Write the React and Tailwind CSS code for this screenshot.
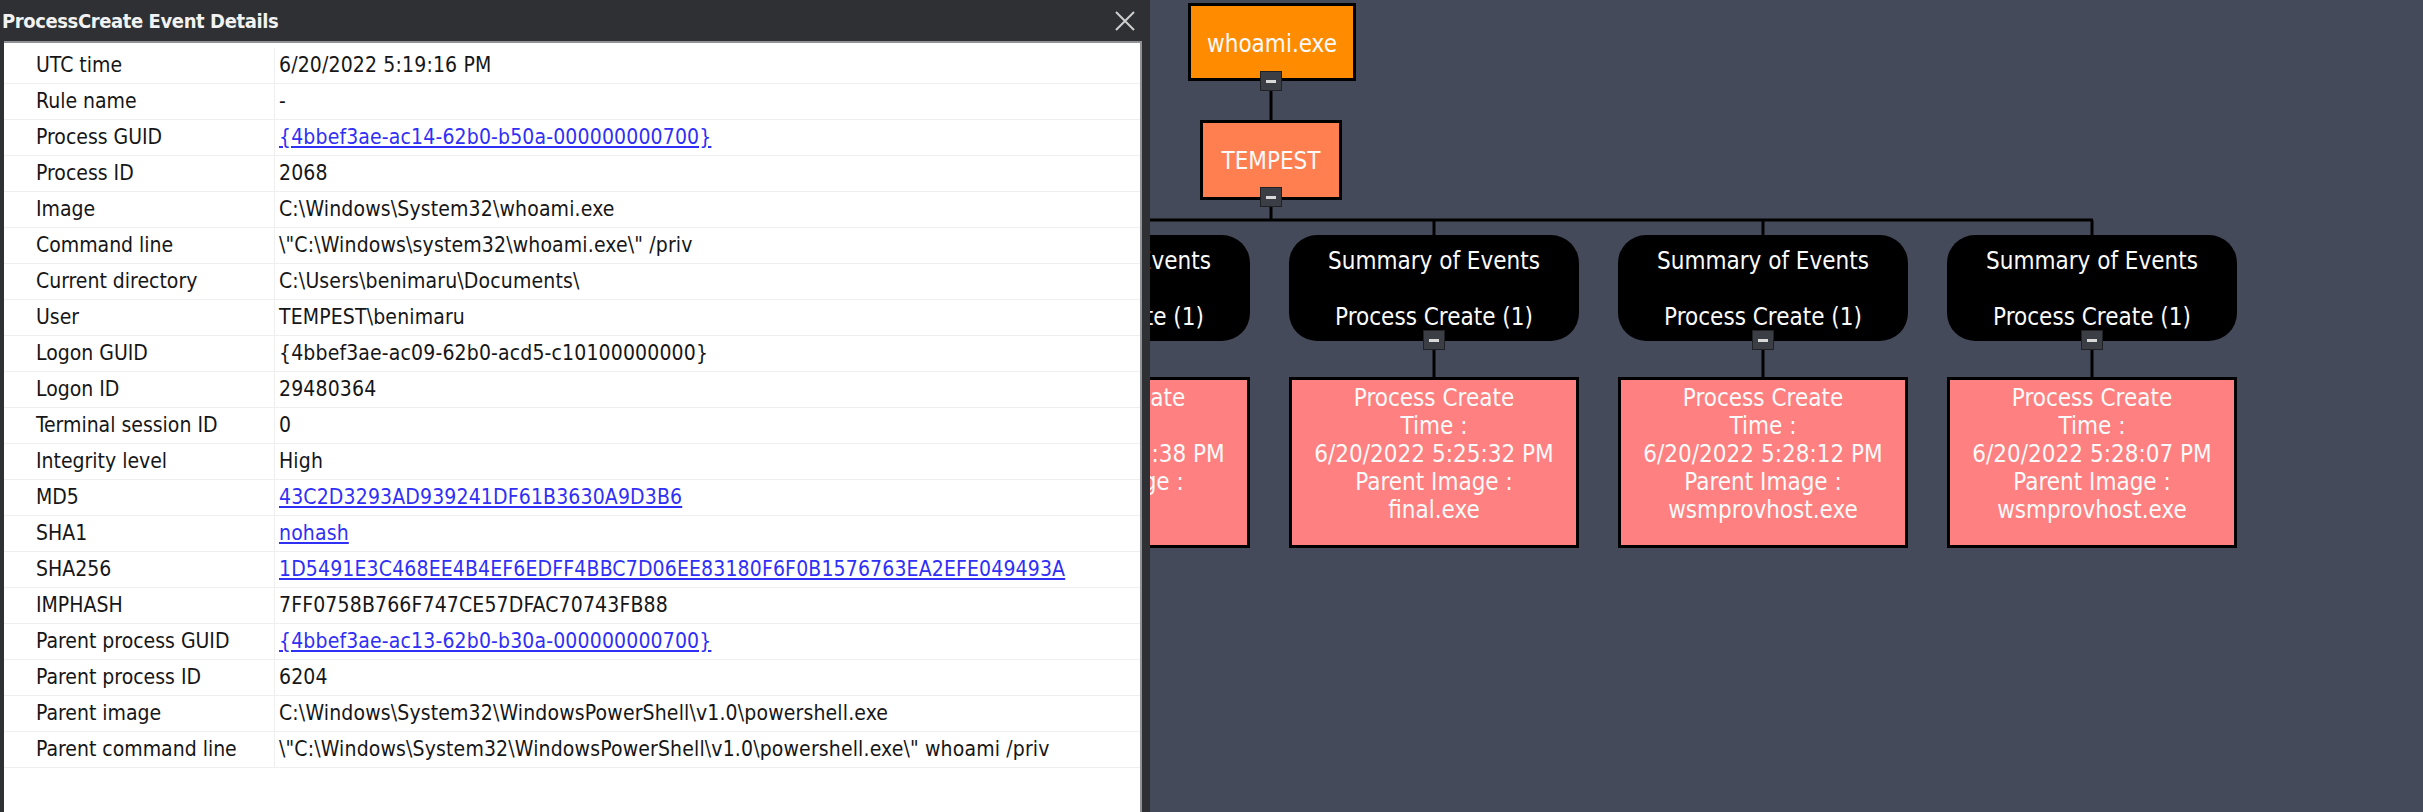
import React from 'react';

const rows = [
    { label: 'UTC time', value: '6/20/2022 5:19:16 PM' },
    { label: 'Rule name', value: '-' },
    { label: 'Process GUID', value: '{4bbef3ae-ac14-62b0-b50a-000000000700}', link: true },
    { label: 'Process ID', value: '2068' },
    { label: 'Image', value: 'C:\\Windows\\System32\\whoami.exe' },
    { label: 'Command line', value: '\\"C:\\Windows\\system32\\whoami.exe\\" /priv' },
    { label: 'Current directory', value: 'C:\\Users\\benimaru\\Documents\\' },
    { label: 'User', value: 'TEMPEST\\benimaru' },
    { label: 'Logon GUID', value: '{4bbef3ae-ac09-62b0-acd5-c10100000000}' },
    { label: 'Logon ID', value: '29480364' },
    { label: 'Terminal session ID', value: '0' },
    { label: 'Integrity level', value: 'High' },
    { label: 'MD5', value: '43C2D3293AD939241DF61B3630A9D3B6', link: true },
    { label: 'SHA1', value: 'nohash', link: true },
    { label: 'SHA256', value: '1D5491E3C468EE4B4EF6EDFF4BBC7D06EE83180F6F0B1576763EA2EFE049493A', link: true },
    { label: 'IMPHASH', value: '7FF0758B766F747CE57DFAC70743FB88' },
    { label: 'Parent process GUID', value: '{4bbef3ae-ac13-62b0-b30a-000000000700}', link: true },
    { label: 'Parent process ID', value: '6204' },
    { label: 'Parent image', value: 'C:\\Windows\\System32\\WindowsPowerShell\\v1.0\\powershell.exe' },
    { label: 'Parent command line', value: '\\"C:\\Windows\\System32\\WindowsPowerShell\\v1.0\\powershell.exe\\" whoami /priv' },
];

// event branches under TEMPEST, x = centre of the column inside the graph canvas
const branches = [
    { x: -45, time: '6/20/2022 5:21:38 PM', parent: 'final.exe' },
    { x: 284, time: '6/20/2022 5:25:32 PM', parent: 'final.exe' },
    { x: 613, time: '6/20/2022 5:28:12 PM', parent: 'wsmprovhost.exe' },
    { x: 942, time: '6/20/2022 5:28:07 PM', parent: 'wsmprovhost.exe' },
];

const Toggle = ({ x, y }) => (
    <div
        className="absolute flex h-[20px] w-[22px] items-center justify-center border border-[#1f2125] bg-[#3b3e45]"
        style={{ left: x - 11, top: y }}
    >
        <div className="h-[3px] w-[10px] bg-[#d8d8d8]" />
    </div>
);

const App = () => {
    return (
        <div className="flex h-[812px] w-full overflow-hidden bg-[#444a59] font-['DejaVu_Sans_Condensed','DejaVu_Sans',sans-serif]">
            {/* Details window */}
            <div className="flex w-[1150px] shrink-0 flex-col bg-[#2e3034]">
                <div className="flex h-[41px] items-center justify-between pl-[2px] pr-[15px]">
                    <span className="text-[20px] font-bold tracking-[-0.4px] text-[#f2f2f2]">ProcessCreate Event Details</span>
                    <svg width="20" height="20" viewBox="0 0 20 20">
                        <path d="M1 1 L19 19 M19 1 L1 19" stroke="#cfcfcf" strokeWidth="2" />
                    </svg>
                </div>
                <div className="ml-[4px] mr-[8px] flex-1 border-t-2 border-r-2 border-[#8f9297] bg-white pt-[5px]">
                    {rows.map((row) => (
                        <div key={row.label} className="flex h-[36px] border-b border-[#efefef] text-[21px] text-[#161616]">
                            <div className="flex w-[271px] shrink-0 items-center border-r border-[#efefef] pl-[32px]">
                                {row.label}
                            </div>
                            <div className="flex items-center whitespace-nowrap pl-[4px] tracking-[0.15px]">
                                {row.link ? (
                                    <span className="text-[#2f2ff5] underline">{row.value}</span>
                                ) : (
                                    row.value
                                )}
                            </div>
                        </div>
                    ))}
                </div>
            </div>

            {/* Process tree canvas */}
            <div className="relative flex-1 overflow-hidden text-[24px] leading-[28px] text-[#fafafa]">
                <svg className="absolute left-0 top-0" width="1273" height="812">
                    <path d="M121 90 L121 122" stroke="#000" strokeWidth="3" fill="none" />
                    <path d="M121 204 L121 220" stroke="#000" strokeWidth="3" fill="none" />
                    <path d="M-50 220 L943 220" stroke="#000" strokeWidth="3" fill="none" />
                    {branches.map((b) => (
                        <g key={b.x}>
                            <path d={`M${b.x} 220 L${b.x} 236`} stroke="#000" strokeWidth="3" />
                            <path d={`M${b.x} 348 L${b.x} 378`} stroke="#000" strokeWidth="3" />
                        </g>
                    ))}
                </svg>

                <div className="absolute left-[38px] top-[3px] flex h-[78px] w-[168px] items-center justify-center border-[3px] border-black bg-[#ff8c00] pt-[4px]">
                    whoami.exe
                </div>
                <Toggle x={121} y={71} />

                <div className="absolute left-[50px] top-[120px] flex h-[80px] w-[142px] items-center justify-center border-[3px] border-black bg-[#ff7f50] pt-[2px]">
                    TEMPEST
                </div>
                <Toggle x={121} y={187} />

                {branches.map((b) => (
                    <React.Fragment key={b.x}>
                        <div
                            className="absolute flex h-[106px] w-[290px] flex-col items-center rounded-[28px] bg-black pt-[12px]"
                            style={{ left: b.x - 145, top: 235 }}
                        >
                            <span>Summary of Events</span>
                            <span>&nbsp;</span>
                            <span>Process Create (1)</span>
                        </div>
                        <Toggle x={b.x} y={330} />
                        <div
                            className="absolute flex h-[171px] w-[290px] flex-col items-center border-[3px] border-black bg-[#ff8080] pt-[4px]"
                            style={{ left: b.x - 145, top: 377 }}
                        >
                            <span>Process Create</span>
                            <span>Time :</span>
                            <span>{b.time}</span>
                            <span>Parent Image :</span>
                            <span>{b.parent}</span>
                        </div>
                    </React.Fragment>
                ))}
            </div>
        </div>
    );
};

export default App;
